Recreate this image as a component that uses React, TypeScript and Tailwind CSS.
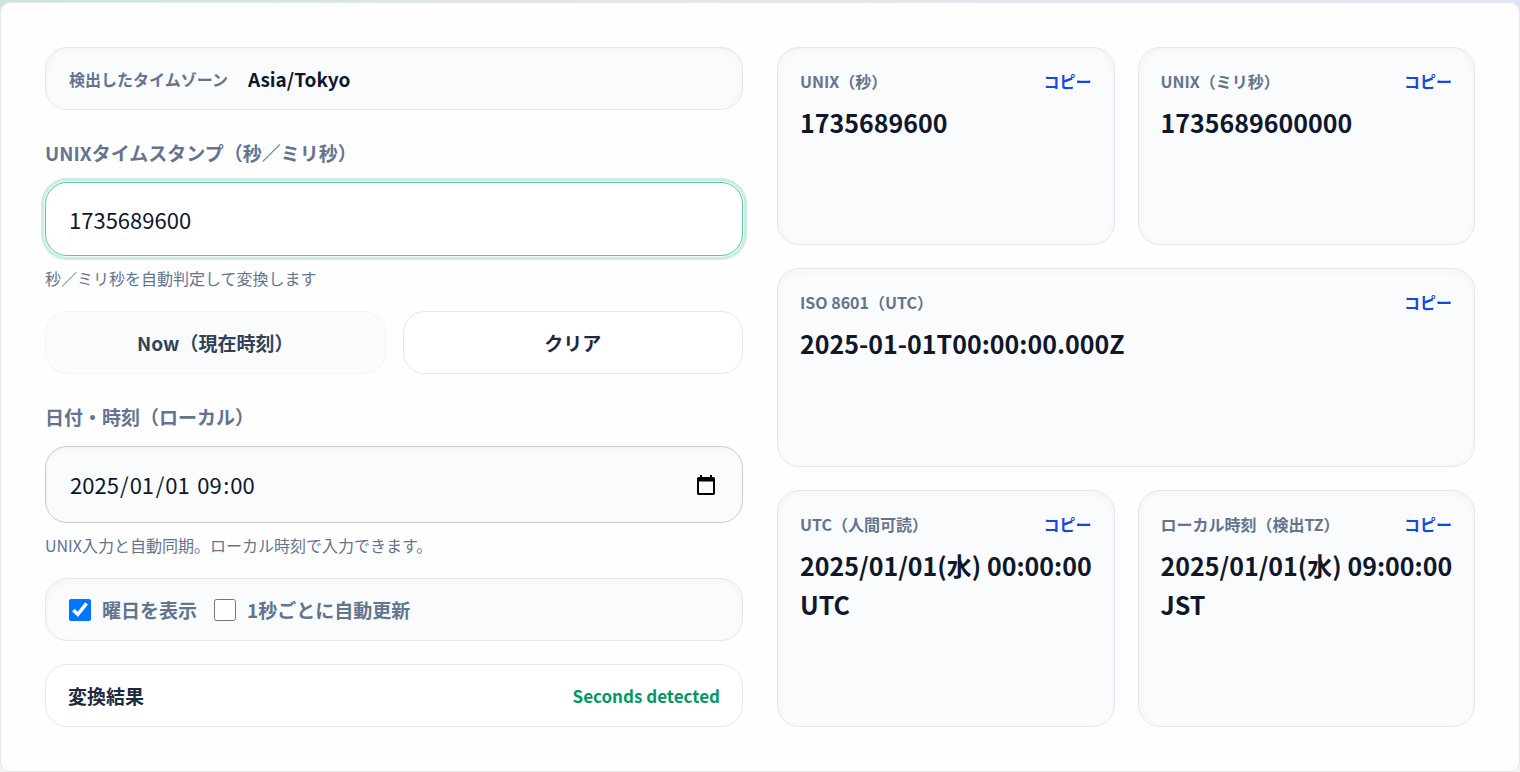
import React, { useState } from "react";
import clsx from "clsx";

interface ResultCardProps {
  label: string;
  value: string;
  zone?: string;
  wide?: boolean;
}

interface DateSegment {
  id: string;
  name: string;
  length: number;
  separator: string;
}

const FONT = "font-['Noto_Sans_CJK_JP','Noto_Sans',sans-serif]";
const PANEL =
  "rounded-[22px] border border-slate-200 bg-[#fafbfd] shadow-[inset_0_2px_8px_rgba(15,23,42,0.03)]";

const DATE_SEGMENTS: DateSegment[] = [
  { id: "year", name: "年", length: 4, separator: "/" },
  { id: "month", name: "月", length: 2, separator: "/" },
  { id: "day", name: "日", length: 2, separator: " " },
  { id: "hour", name: "時", length: 2, separator: ":" },
  { id: "minute", name: "分", length: 2, separator: "" },
];

const ResultCard: React.FC<ResultCardProps> = ({ label, value, zone, wide }) => {
  const handleCopy = () => {
    navigator.clipboard?.writeText(zone ? `${value} ${zone}` : value);
  };

  return (
    <section className={clsx(PANEL, "px-[22px] py-[19px]", wide && "col-span-2")}>
      <div className="flex items-center justify-between">
        <h3 className="text-base leading-7 font-bold text-slate-500">{label}</h3>
        <button
          type="button"
          onClick={handleCopy}
          className="text-base leading-7 font-bold text-blue-700 hover:underline"
        >
          コピー
        </button>
      </div>
      <p className="mt-2 text-[25px] leading-[39px] font-bold text-slate-900">
        {/* keep date and time on one line, only the zone may wrap */}
        <span className="whitespace-nowrap">{value}</span> {zone}
      </p>
    </section>
  );
};

const CalendarIcon = () => (
  <svg viewBox="0 0 18 20" className="h-5 w-[18px]" aria-hidden="true">
    <path
      fill="#000"
      fillRule="evenodd"
      d="M3 0h2v2h8V0h2v2h1.2c1 0 1.8.8 1.8 1.8v14.4c0 1-.8 1.8-1.8 1.8H1.800C.8 20 0 19.200 0 18.200V3.800C0 2.800.8 2 1.800 2H3zM2 6.500V18h14V6.500z"
    />
  </svg>
);

export default function App() {
  const [timestamp, setTimestamp] = useState("1735689600");
  const [localDate, setLocalDate] = useState<Record<string, string>>({
    year: "2025",
    month: "01",
    day: "01",
    hour: "09",
    minute: "00",
  });
  const [showWeekday, setShowWeekday] = useState(true);
  const [autoUpdate, setAutoUpdate] = useState(false);

  const seconds = timestamp || "0";
  const weekday = showWeekday ? "(水)" : "";

  return (
    <div
      lang="ja"
      className={clsx(
        FONT,
        "bg-slate-100 bg-linear-to-r from-[#cfe5e1] via-[#e4e5ea] to-[#dfe5f8] bg-[length:100%_24px] bg-no-repeat pt-0.5 pb-px text-slate-900"
      )}
    >
      <main className="grid grid-cols-2 gap-[34px] rounded-[10px] border border-gray-200 bg-[#fefefe] p-11">
        <div className="flex flex-col">
          <div className={clsx(PANEL, "flex items-center gap-5 px-[23px] py-4")}>
            <span className="text-base font-bold text-slate-500">
              検出したタイムゾーン
            </span>
            <span className="text-[19px] leading-[29px] font-bold">Asia/Tokyo</span>
          </div>

          <label
            htmlFor="timestamp"
            className="mt-7 text-[19px] leading-[30px] font-bold text-slate-500"
          >
            UNIXタイムスタンプ（秒／ミリ秒）
          </label>
          <input
            id="timestamp"
            type="text"
            inputMode="numeric"
            value={timestamp}
            onChange={(e) => setTimestamp(e.target.value)}
            className="mt-3.5 h-[74px] w-full rounded-[22px] border border-[#5cc5ad] bg-white px-[23px] text-[22px] shadow-[0_0_0_1px_#effaf7,0_0_0_4px_#c9ede3] outline-none"
          />
          <p className="mt-2.5 text-base leading-6 text-slate-500">
            秒／ミリ秒を自動判定して変換します
          </p>

          <div className="mt-[21px] grid grid-cols-2 gap-[17px]">
            <button
              type="button"
              className="rounded-[22px] border border-slate-100 bg-[#f9fbfc] py-4 text-[19px] leading-[29px] font-bold text-slate-700"
            >
              Now（現在時刻）
            </button>
            <button
              type="button"
              onClick={() => setTimestamp("")}
              className="rounded-[22px] border border-slate-200 bg-white py-4 text-[19px] leading-[29px] font-bold text-slate-800"
            >
              クリア
            </button>
          </div>

          <label
            htmlFor="year"
            className="mt-7 text-[19px] leading-[30px] font-bold text-slate-500"
          >
            日付・時刻（ローカル）
          </label>
          <div className="mt-3.5 flex h-[77px] items-center justify-between rounded-[22px] border border-[#c8cbd4] bg-[#fafbfd] pr-[27px] pl-[23px] shadow-[inset_0_2px_4px_rgba(15,23,42,0.03)]">
            <div className="flex items-center text-[22px] whitespace-pre">
              {DATE_SEGMENTS.map((segment) => (
                <React.Fragment key={segment.id}>
                  <input
                    id={segment.id}
                    type="text"
                    inputMode="numeric"
                    aria-label={segment.name}
                    maxLength={segment.length}
                    value={localDate[segment.id]}
                    onChange={(e) =>
                      setLocalDate({ ...localDate, [segment.id]: e.target.value })
                    }
                    className={clsx(
                      "bg-transparent px-px outline-none",
                      segment.length === 4 ? "w-[51px]" : "w-[27px]"
                    )}
                  />
                  {segment.separator && <span>{segment.separator}</span>}
                </React.Fragment>
              ))}
            </div>
            <button type="button" aria-label="カレンダーを開く">
              <CalendarIcon />
            </button>
          </div>
          <p className="mt-2.5 text-base leading-6 text-slate-500">
            UNIX入力と自動同期。ローカル時刻で入力できます。
          </p>

          <div
            className={clsx(
              PANEL,
              "mt-[21px] flex items-center gap-[17px] px-[23px] py-4 text-[19px] leading-[29px] font-bold text-slate-500"
            )}
          >
            <label className="flex items-center gap-[11px]">
              <input
                type="checkbox"
                checked={showWeekday}
                onChange={(e) => setShowWeekday(e.target.checked)}
                className="size-[22px]"
              />
              曜日を表示
            </label>
            <label className="flex items-center gap-[11px]">
              <input
                type="checkbox"
                checked={autoUpdate}
                onChange={(e) => setAutoUpdate(e.target.checked)}
                className="size-[22px]"
              />
              1秒ごとに自動更新
            </label>
          </div>

          <div className="mt-[23px] flex items-center justify-between rounded-[22px] border border-slate-200 bg-white px-[22px] py-4">
            <h2 className="text-[19px] leading-[29px] font-bold text-slate-800">
              変換結果
            </h2>
            <span className="text-[17px] leading-[29px] font-bold text-emerald-600">
              Seconds detected
            </span>
          </div>
        </div>

        <div className="grid grid-cols-2 gap-[23px]">
          <ResultCard label="UNIX（秒）" value={seconds} />
          <ResultCard label="UNIX（ミリ秒）" value={`${seconds}000`} />
          <ResultCard label="ISO 8601（UTC）" value="2025-01-01T00:00:00.000Z" wide />
          <ResultCard
            label="UTC（人間可読）"
            value={`2025/01/01${weekday} 00:00:00`}
            zone="UTC"
          />
          <ResultCard
            label="ローカル時刻（検出TZ）"
            value={`2025/01/01${weekday} 09:00:00`}
            zone="JST"
          />
        </div>
      </main>
    </div>
  );
}
